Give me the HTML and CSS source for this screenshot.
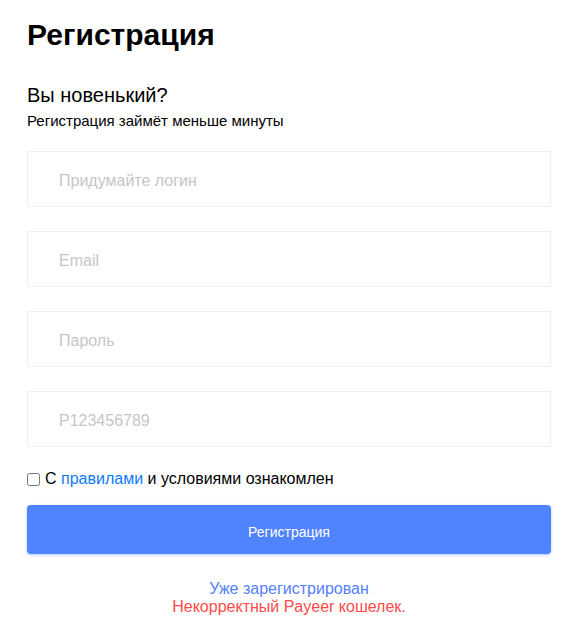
FILE: index.html
```html
<!DOCTYPE html>
<html lang="ru">
<head>
<meta charset="utf-8">
<title>Регистрация</title>
<link rel="stylesheet" href="styles.css">
</head>
<body>
<div class="page">
  <h1 class="title">Регистрация</h1>
  <div class="lead">Вы новенький?</div>
  <div class="sub">Регистрация займёт меньше минуты</div>
  <form class="form">
    <input class="field" type="text" placeholder="Придумайте логин">
    <input class="field" type="text" placeholder="Email">
    <input class="field" type="password" placeholder="Пароль">
    <input class="field" type="text" placeholder="P123456789">
    <label class="agree"><input class="check" type="checkbox"><span>С <a class="link" href="#">правилами</a> и условиями ознакомлен</span></label>
    <button class="submit" type="button">Регистрация</button>
  </form>
  <div class="footer">
    <a class="already" href="#">Уже зарегистрирован</a>
    <div class="error">Некорректный Payeer кошелек.</div>
  </div>
</div>
</body>
</html>
```

FILE: styles.css
```css
html, body {
  margin: 0;
  padding: 0;
  background: #fff;
}
body {
  font-family: "Liberation Sans", Arial, sans-serif;
  color: #000;
}
.page {
  width: 524px;
  margin-left: 27px;
  padding-top: 18px;
}
.title {
  margin: 0;
  font-size: 30px;
  line-height: 34px;
  font-weight: bold;
}
.lead {
  margin-top: 32px;
  font-size: 20px;
  line-height: 23px;
}
.sub {
  margin-top: 5px;
  font-size: 15px;
  line-height: 17px;
}
.form {
  margin: 22px 0 0;
  display: flex;
  flex-direction: column;
}
.field {
  display: block;
  width: 100%;
  height: 56px;
  box-sizing: border-box;
  border: 1px solid #efefef;
  border-radius: 0;
  padding: 3px 31px 0;
  margin: 0 0 24px;
  font-family: "Liberation Sans", Arial, sans-serif;
  font-size: 16px;
  color: #000;
  outline: none;
  background: #fff;
}
.field::placeholder {
  color: #c6c6c6;
}
.agree {
  display: flex;
  align-items: center;
  height: 18px;
  margin-top: -1px;
  font-size: 16px;
}
.check {
  width: 13px;
  height: 13px;
  margin: 0 5px 0 0;
}
.link {
  color: #0f7bff;
  text-decoration: none;
}
.submit {
  margin-top: 17px;
  height: 49px;
  width: 100%;
  border: none;
  border-radius: 4px;
  background: #4f83ff;
  color: #fff;
  padding-top: 5px;
  font-family: "Liberation Sans", Arial, sans-serif;
  font-size: 14px;
  box-shadow: 0 1px 3px rgba(79, 131, 255, 0.45);
}
.footer {
  margin-top: 26px;
  text-align: center;
  font-size: 16px;
}
.already {
  color: #5580ff;
  text-decoration: none;
}
.error {
  color: #ff4a4a;
}
```
